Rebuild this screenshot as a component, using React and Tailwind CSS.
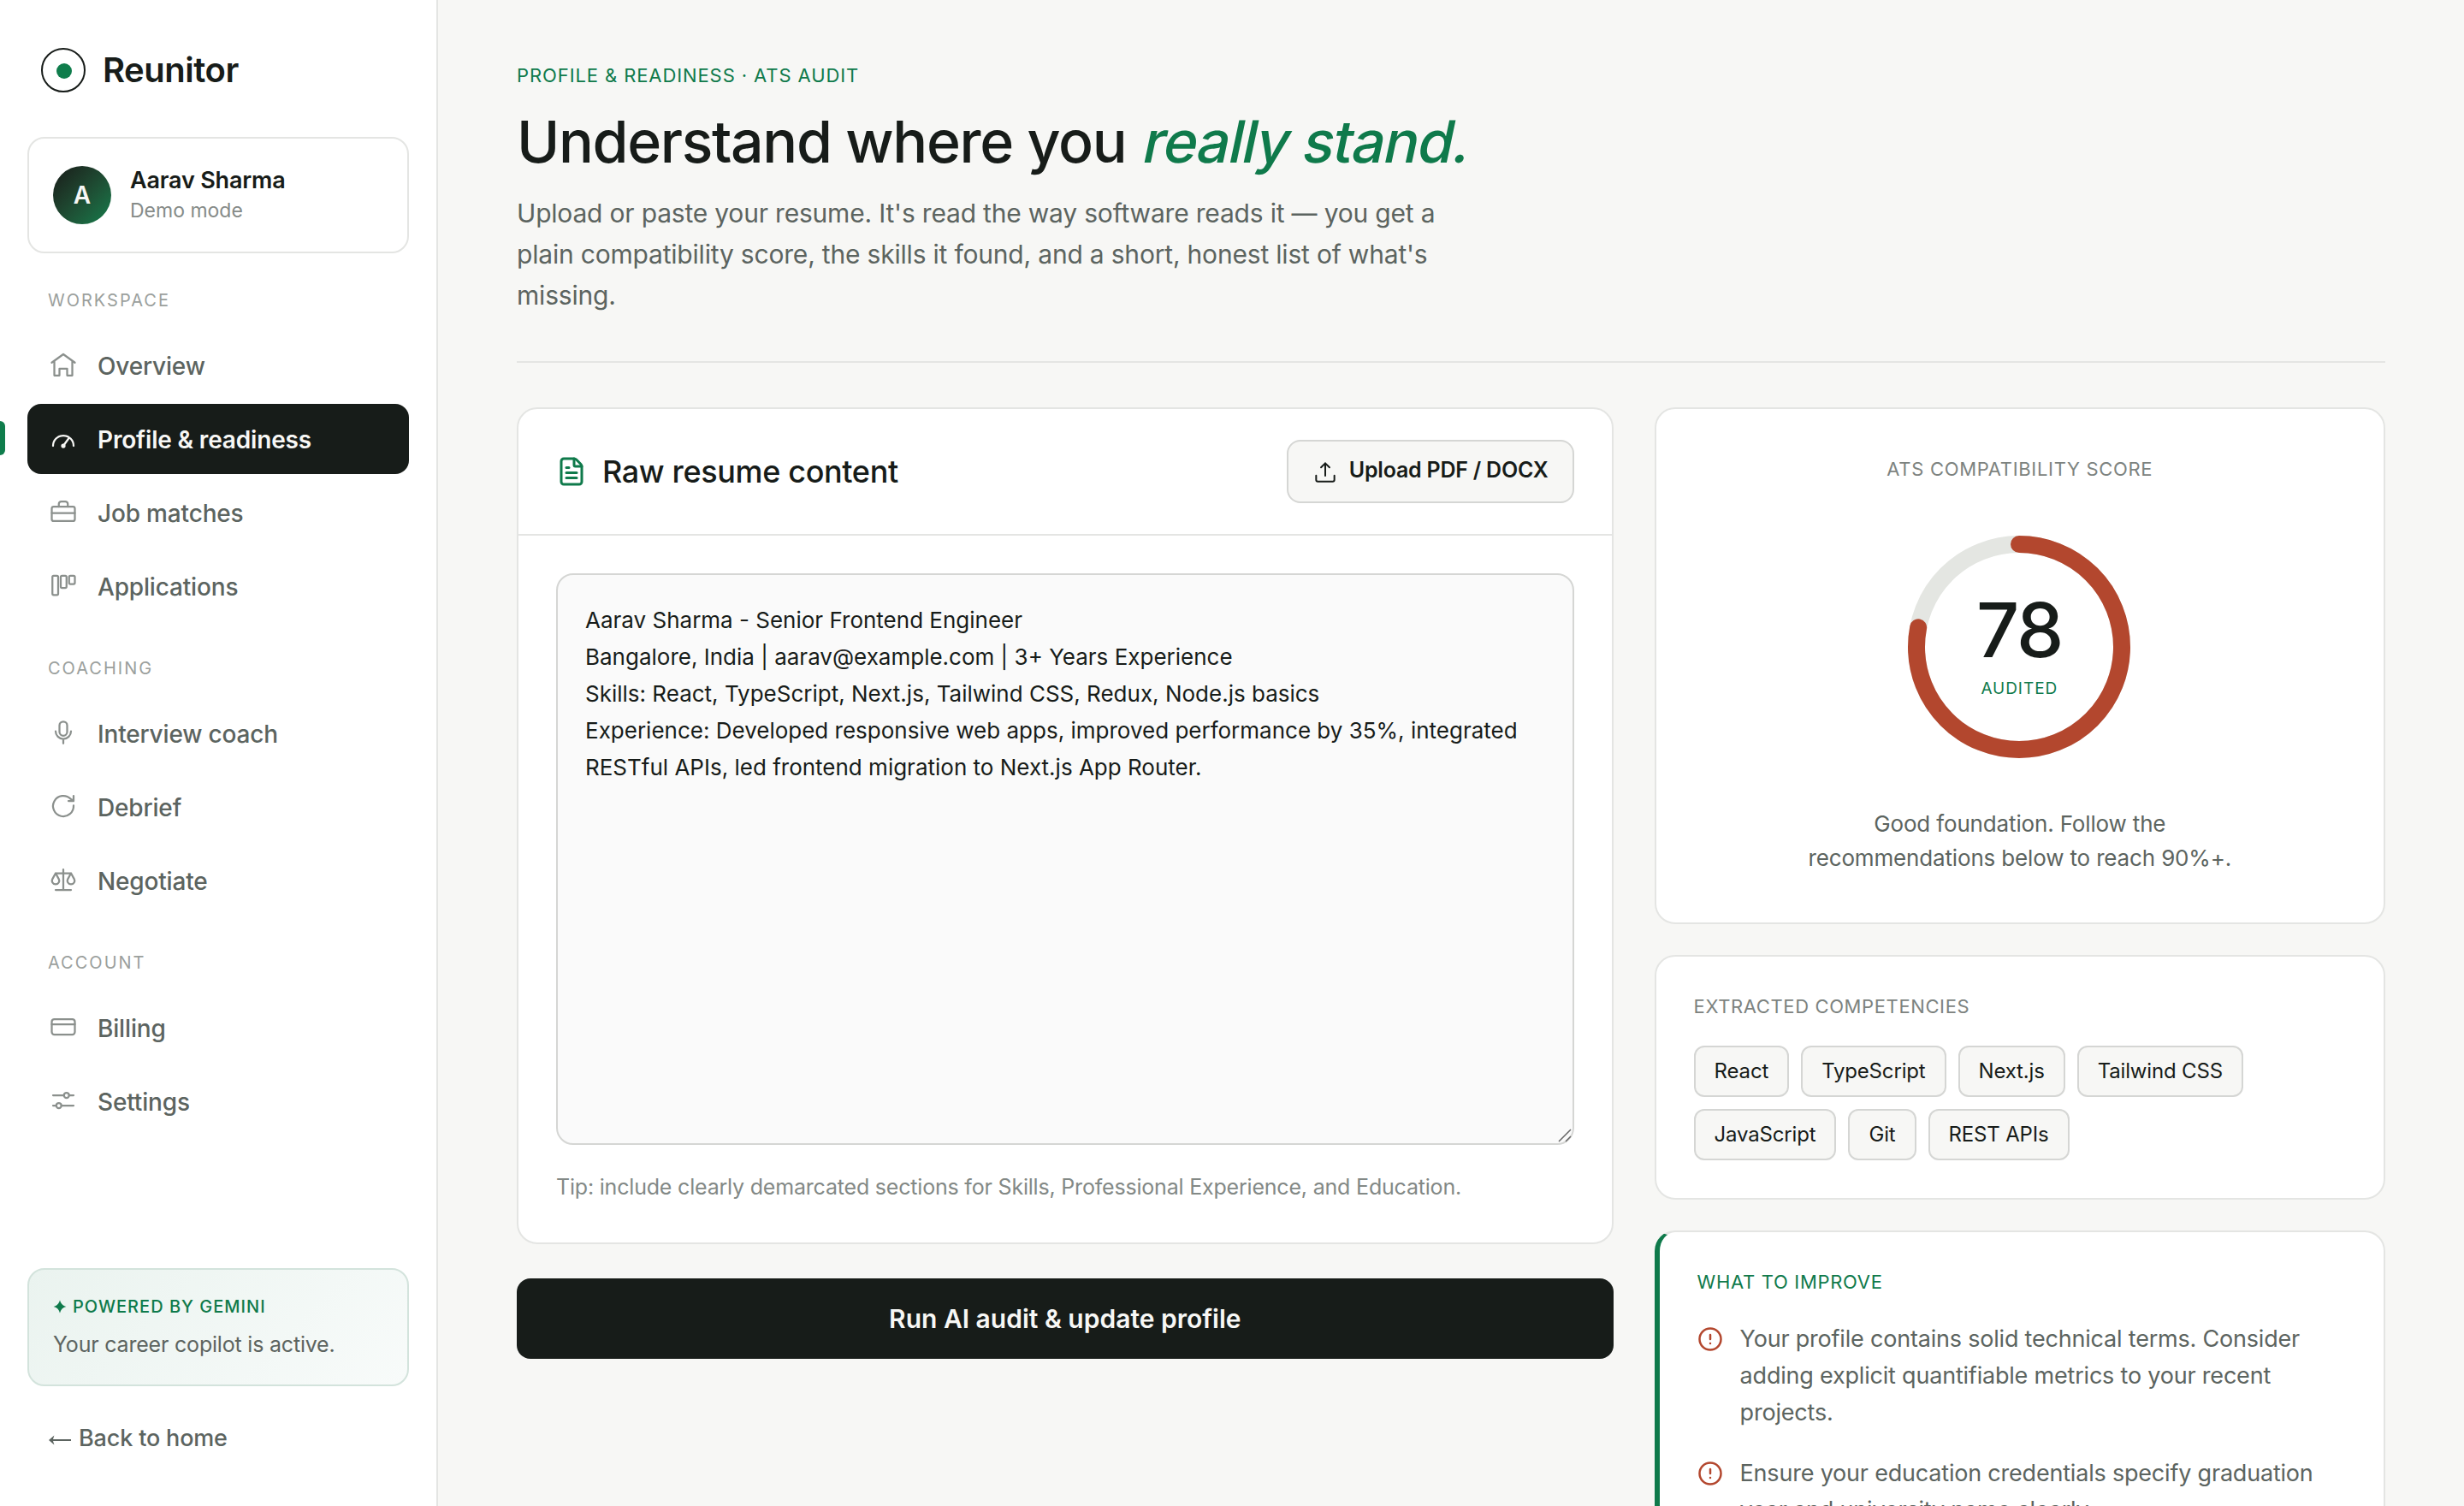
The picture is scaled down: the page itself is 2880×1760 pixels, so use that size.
import React from "react";
import { CircleAlert, FileText } from "lucide-react";

const navSections = [
  {
    title: "Workspace",
    items: [
      { label: "Overview", icon: "home" },
      { label: "Profile & readiness", icon: "gauge", active: true },
      { label: "Job matches", icon: "briefcase" },
      { label: "Applications", icon: "board" },
    ],
  },
  {
    title: "Coaching",
    items: [
      { label: "Interview coach", icon: "mic" },
      { label: "Debrief", icon: "refresh" },
      { label: "Negotiate", icon: "scale" },
    ],
  },
  {
    title: "Account",
    items: [
      { label: "Billing", icon: "card" },
      { label: "Settings", icon: "sliders" },
    ],
  },
];

const resumeText = `Aarav Sharma - Senior Frontend Engineer
Bangalore, India | aarav@example.com | 3+ Years Experience
Skills: React, TypeScript, Next.js, Tailwind CSS, Redux, Node.js basics
Experience: Developed responsive web apps, improved performance by 35%, integrated RESTful APIs, led frontend migration to Next.js App Router.`;

const skills = [
  "React",
  "TypeScript",
  "Next.js",
  "Tailwind CSS",
  "JavaScript",
  "Git",
  "REST APIs",
];

const improvements = [
  "Your profile contains solid technical terms. Consider adding explicit quantifiable metrics to your recent projects.",
  "Ensure your education credentials specify graduation year and university name clearly.",
];

const iconPaths = {
  home: (
    <path d="M3 10.5 12 4l9 6.5M5 9.2v11.3h4v-5.3h6v5.3h4V9.2" />
  ),
  gauge: (
    <>
      <path d="M4 18a8 8 0 0 1 16 0M12 18l4-5.5" />
      <circle cx="12" cy="18" r="1" fill="currentColor" />
    </>
  ),
  briefcase: (
    <>
      <rect x="3" y="8" width="18" height="11.3" rx="1.5" />
      <path d="M8.5 8V6a2 2 0 0 1 2-2h3a2 2 0 0 1 2 2v2M3 13h18" />
    </>
  ),
  board: (
    <>
      <rect x="3.5" y="4.5" width="4.5" height="15" rx="1" />
      <rect x="10" y="4.5" width="4.5" height="9.5" rx="1" />
      <rect x="16.5" y="4.5" width="4.5" height="6.5" rx="1" />
    </>
  ),
  mic: (
    <>
      <rect x="9" y="3.5" width="6" height="11" rx="3" />
      <path d="M6 11a6 6 0 0 0 12 0M12 17v3.5" />
    </>
  ),
  refresh: (
    <path d="M20 11.6a8 8 0 1 1-2.3-5.2L20 8M20 4v4h-4" />
  ),
  scale: (
    <path d="M12 4v16M6 20h12M6 7h12M6 7l-2.5 4.6a2.8 2.8 0 1 0 5 0zM18 7l-2.5 4.6a2.8 2.8 0 1 0 5 0z" />
  ),
  card: (
    <>
      <rect x="3" y="6" width="18" height="12" rx="2" />
      <path d="M3 10h18" />
    </>
  ),
  sliders: (
    <>
      <path d="M4 8h8.5M16.5 8H20M4 16h2.5M10.5 16H20" />
      <circle cx="14.5" cy="8" r="2" />
      <circle cx="8.5" cy="16" r="2" />
    </>
  ),
  upload: (
    <path d="M12 15V4M8.3 7.7 12 4l3.7 3.7M4 14.8v3.7A1.5 1.5 0 0 0 5.5 20h13a1.5 1.5 0 0 0 1.5-1.5v-3.7" />
  ),
};

function Icon({ name, className }) {
  return (
    <svg
      viewBox="0 0 24 24"
      fill="none"
      stroke="currentColor"
      strokeWidth="1.5"
      strokeLinecap="round"
      strokeLinejoin="round"
      className={className}
    >
      {iconPaths[name]}
    </svg>
  );
}

function NavItem({ item }) {
  return (
    <a
      className={
        item.active
          ? "relative flex items-center gap-[22px] h-[82px] px-6 rounded-2xl bg-[#171c19] text-[#f7f7f5] font-semibold"
          : "relative flex items-center gap-[22px] h-[82px] px-6 rounded-2xl text-[#5c6460] font-medium"
      }
    >
      {item.active && (
        <span className="absolute -left-8 top-5 w-1.5 h-10 rounded-r-md bg-[#0f7d4c]" />
      )}
      <Icon
        name={item.icon}
        className={
          item.active
            ? "size-9 mb-0.5 shrink-0"
            : "size-9 mb-0.5 shrink-0 text-[#8b908d]"
        }
      />
      <span className="mt-0.5 text-[28px] leading-10 tracking-[-0.006em]">
        {item.label}
      </span>
    </a>
  );
}

function Sidebar() {
  return (
    <aside className="flex flex-col w-[512px] shrink-0 h-full px-8 pt-14 pb-[59px] bg-white border-r-2 border-[#e4e5e3]">
      {/* Brand */}
      <div className="flex items-center gap-5 pl-4">
        <span className="flex items-center justify-center size-[52px] rounded-full border-2 border-[#171c19] pt-0.5 pl-0.5">
          <span className="size-[18px] rounded-full bg-[#0f7d4c]" />
        </span>
        <span className="text-[40px] leading-[50px] font-semibold tracking-[-0.012em] text-[#171c19]">
          Reunitor
        </span>
      </div>

      {/* User card */}
      <div className="flex items-center gap-[22px] mt-[52px] h-[136px] px-7 border-2 border-[#e4e5e3] rounded-[20px]">
        <span className="flex items-center justify-center size-[68px] rounded-full bg-linear-135 from-[#171c19] to-[#0f7d4c] text-[28px] leading-none font-semibold text-[#f7f7f5]">
          A
        </span>
        <div>
          <p className="text-[27px] leading-9 font-semibold tracking-[-0.007em] text-[#171c19]">
            Aarav Sharma
          </p>
          <p className="text-[23px] leading-[34px] text-[#868b88]">Demo mode</p>
        </div>
      </div>

      <nav>
        {navSections.map((section) => (
          <div key={section.title}>
            <p className="flex items-center h-[90px] pt-5 pl-6 text-[20px] tracking-[0.1em] uppercase text-[#9ba09d]">
              {section.title}
            </p>
            <div className="flex flex-col gap-1">
              {section.items.map((item) => (
                <NavItem key={item.label} item={item} />
              ))}
            </div>
          </div>
        ))}
      </nav>

      {/* Copilot status */}
      <div className="mt-auto h-[138px] pt-[29px] px-7 border-2 border-[#d3e3dc] rounded-[20px] bg-linear-135 from-[#eaf3ef] to-[#f8fbfa]">
        <p className="flex items-center gap-[7px] text-[20px] leading-7 font-medium tracking-[0.05em] text-[#0f7a4b]">
          <svg viewBox="0 0 16 16" className="size-4 fill-current">
            <path d="M8 .6C9 4.6 11.4 7 15.4 8 11.4 9 9 11.4 8 15.4 7 11.4 4.6 9 .6 8 4.6 7 7 4.6 8 .6z" />
          </svg>
          POWERED BY GEMINI
        </p>
        <p className="mt-2.5 text-[25px] leading-10 tracking-[-0.008em] text-[#5c6460]">
          Your career copilot is active.
        </p>
      </div>

      <a className="flex items-center gap-2 mt-[41px] pl-6 text-[27px] leading-10 font-medium tracking-[-0.006em] text-[#5c6460]">
        <svg viewBox="0 0 28 12" className="w-7 h-3 mt-1 fill-current">
          <path d="M1 6 7.4.6 6 5.1h21v1.8H6l1.4 4.5z" />
        </svg>
        Back to home
      </a>
    </aside>
  );
}

function ResumeCard() {
  return (
    <section className="bg-white border-2 border-[#e4e5e3] rounded-3xl">
      <div className="flex items-center justify-between h-[148px] px-11 border-b-2 border-[#e4e5e3]">
        <h2 className="flex items-center gap-[18px] text-[36px] leading-[44px] font-medium tracking-[-0.01em] text-[#171c19]">
          <FileText className="size-9 text-[#0f7a4b]" />
          Raw resume content
        </h2>
        <button className="flex items-center gap-3 h-[74px] pl-[27px] pr-7 border-2 border-[#d5d6d4] rounded-2xl bg-[#f7f7f5] text-[#171c19]">
          <Icon name="upload" className="size-8 mt-0.5" />
          <span className="mb-1 text-[25px] leading-9 font-semibold tracking-[-0.009em]">
            Upload PDF / DOCX
          </span>
        </button>
      </div>

      <div className="p-11">
        <div className="relative">
          <textarea
            className="block w-full h-[668px] p-8 border-2 border-[#d5d6d4] rounded-[20px] bg-[#fafafa] text-[26px] leading-[42.9px] text-[#171c19] resize-none outline-none"
            defaultValue={resumeText}
          />
          {/* Resize grip */}
          <svg
            viewBox="0 0 16 16"
            className="absolute right-[3px] bottom-[3px] size-4 stroke-[#666] stroke-[1.5]"
          >
            <path d="M1 15 15 1M9 15l6-6" />
          </svg>
        </div>
        <p className="mt-7 text-[25px] leading-[42px] tracking-[-0.0078em] text-[#838986]">
          Tip: include clearly demarcated sections for Skills, Professional
          Experience, and Education.
        </p>
      </div>
    </section>
  );
}

function ScoreCard({ score }) {
  const circumference = 2 * Math.PI * 120;

  return (
    <section className="flex flex-col items-center pt-[54px] pb-[55px] bg-white border-2 border-[#e4e5e3] rounded-3xl">
      <p className="text-[22px] leading-8 tracking-[0.031em] text-[#7d8380]">
        ATS COMPATIBILITY SCORE
      </p>
      <div className="grid place-items-center mt-[62px] mr-px size-[260px]">
        <svg
          viewBox="0 0 260 260"
          fill="none"
          strokeWidth="20"
          className="col-start-1 row-start-1 size-[260px] -rotate-90"
        >
          <circle cx="130" cy="130" r="120" stroke="#e4e6e2" />
          <circle
            cx="130"
            cy="130"
            r="120"
            stroke="#b3472e"
            strokeLinecap="round"
            strokeDasharray={circumference}
            strokeDashoffset={circumference * (1 - score / 100)}
          />
        </svg>
        <div className="col-start-1 row-start-1 flex flex-col items-center">
          <span className="text-[88px] leading-[84px] font-medium tracking-[-0.023em] text-[#171c19]">
            {score}
          </span>
          <span className="mt-[13px] text-[19px] leading-7 tracking-[0.05em] text-[#0f7a4b]">
            AUDITED
          </span>
        </div>
      </div>
      <p className="mt-[57px] max-w-[520px] text-center text-[26px] leading-10 tracking-[-0.006em] text-[#5c6460]">
        Good foundation. Follow the recommendations below to reach 90%+.
      </p>
    </section>
  );
}

function SkillsCard() {
  return (
    <section className="pt-[42px] px-11 pb-11 bg-white border-2 border-[#e4e5e3] rounded-3xl">
      <p className="text-[22px] leading-8 tracking-[0.028em] text-[#7d8380]">
        EXTRACTED COMPETENCIES
      </p>
      <div className="flex flex-wrap gap-3.5 mt-[30px]">
        {skills.map((skill) => (
          <span
            key={skill}
            className="flex items-center h-[60px] px-[22px] border-2 border-[#d5d6d4] rounded-xl bg-[#f7f7f5] text-[24px] tracking-[-0.007em] text-[#171c19]"
          >
            {skill}
          </span>
        ))}
      </div>
    </section>
  );
}

function ImproveCard() {
  return (
    <section className="pt-[42px] px-11 pb-11 bg-white border-2 border-l-6 border-[#e4e5e3] border-l-[#0f7a4b] rounded-3xl">
      <p className="text-[22px] leading-8 tracking-[0.031em] text-[#0f7a4b]">
        WHAT TO IMPROVE
      </p>
      <ul className="flex flex-col gap-7 mt-[29px]">
        {improvements.map((text) => (
          <li key={text} className="flex items-start gap-5">
            <CircleAlert className="size-[30px] mt-[7px] shrink-0 text-[#b3472e]" />
            <span className="text-[27px] leading-[43px] tracking-[-0.0075em] text-[#5c6460]">
              {text}
            </span>
          </li>
        ))}
      </ul>
    </section>
  );
}

function App() {
  return (
    <div className="flex w-full h-[1760px] overflow-hidden bg-[#f7f7f5] font-['Inter',sans-serif]">
      <Sidebar />

      <main className="flex-1 pt-[72px] px-[92px]">
        <header className="pb-[53px] border-b-2 border-[#e4e5e3]">
          <p className="text-[22px] leading-8 tracking-[0.041em] text-[#0f7a4b]">
            PROFILE &amp; READINESS · ATS AUDIT
          </p>
          <h1 className="mt-[23px] text-[68px] leading-[76px] font-medium tracking-[-0.02em] text-[#171c19]">
            Understand where you{" "}
            {/* slanted upright letters rather than the italic cut */}
            <em className="inline-block not-italic -skew-x-12 origin-[0_82%] tracking-[-0.02em] text-[#0f7a4b]">
              really stand.
            </em>
          </h1>
          <p className="mt-[22px] max-w-[1120px] text-[30px] leading-[48px] tracking-[-0.0065em] text-[#5c6460]">
            Upload or paste your resume. It's read the way software reads it —
            you get a plain compatibility score, the skills it found, and a
            short, honest list of what's missing.
          </p>
        </header>

        <div className="grid grid-cols-[3fr_2fr] gap-12 items-start mt-[52px]">
          <div className="flex flex-col gap-10">
            <ResumeCard />
            <button className="h-[94px] rounded-2xl bg-[#171c19] text-[30px] leading-10 font-semibold text-[#f7f7f5]">
              Run AI audit &amp; update profile
            </button>
          </div>
          <div className="flex flex-col gap-9">
            <ScoreCard score={78} />
            <SkillsCard />
            <ImproveCard />
          </div>
        </div>
      </main>
    </div>
  );
}

export default App;
